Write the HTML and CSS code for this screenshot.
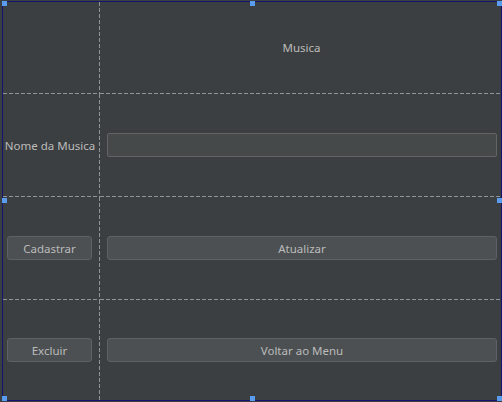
FILE: index.html
```html
<!DOCTYPE html>
<html>
<head>
<meta charset="utf-8">
<link rel="stylesheet" href="styles.css">
</head>
<body>
<div class="frame">
  <div class="grid">
    <div class="cell c1 r0"></div>
    <div class="cell c2 r0"><span class="title">Musica</span></div>
    <div class="cell c1 r1"><span class="label">Nome da Musica</span></div>
    <div class="cell c2 r1"><div class="field"></div></div>
    <div class="cell c1 r2"><div class="btn small">Cadastrar</div></div>
    <div class="cell c2 r2"><div class="btn wide">Atualizar</div></div>
    <div class="cell c1 r3"><div class="btn small">Excluir</div></div>
    <div class="cell c2 r3"><div class="btn wide">Voltar ao Menu</div></div>
  </div>
  <span class="handle h-tl"></span>
  <span class="handle h-tm"></span>
  <span class="handle h-tr"></span>
  <span class="handle h-ml"></span>
  <span class="handle h-mr"></span>
  <span class="handle h-bl"></span>
  <span class="handle h-bm"></span>
  <span class="handle h-br"></span>
</div>
</body>
</html>
```

FILE: styles.css
```css
html, body {
  margin: 0;
  padding: 0;
  background: #3c3f41;
}
body {
  width: 502px;
  height: 402px;
  overflow: hidden;
  font-family: "Noto Sans", "DejaVu Sans", sans-serif;
  font-size: 11.5px;
  color: #bbbbbb;
}
.frame {
  position: relative;
  margin: 1px 0 0 2px;
  width: 498px;
  height: 398px;
  border: 1px solid #14146e;
}
.grid {
  display: grid;
  grid-template-columns: 97px 401px;
  grid-template-rows: 92px 103px 103px 100px;
}
.cell {
  display: flex;
  align-items: center;
  background-repeat: no-repeat;
}
.c1 {
  background-image: repeating-linear-gradient(180deg, #8f949a 0 4px, transparent 4px 6px);
  background-position: right top;
  background-size: 1px 100%;
}
.c1.r0, .c1.r1, .c1.r2 {
  background-image:
    repeating-linear-gradient(180deg, #8f949a 0 4px, transparent 4px 6px),
    repeating-linear-gradient(90deg, #8f949a 0 4px, transparent 4px 6px);
  background-position: right top, left bottom;
  background-size: 1px 100%, 100% 1px;
}
.c2.r0, .c2.r1, .c2.r2 {
  background-image: repeating-linear-gradient(90deg, #8f949a 0 4px, transparent 4px 6px);
  background-position: left bottom;
  background-size: 100% 1px;
}
.r0, .r1, .r2 {
  padding-bottom: 1px;
}
.c1 {
  padding-right: 1px;
  justify-content: center;
}
.c2 {
  padding: 0 4px 0 7px;
}
.c2.r0 {
  justify-content: center;
  padding: 0 0 1px 0;
}
.c2.r1, .c2.r2 {
  padding-bottom: 1px;
}
.title {
  margin-left: 2px;
}
.label {
  white-space: nowrap;
  margin-right: 2px;
}
.field {
  flex: 1;
  height: 22px;
  background: #45494a;
  border: 1px solid #646464;
  border-radius: 2px;
}
.btn {
  box-sizing: border-box;
  height: 24px;
  display: flex;
  align-items: center;
  justify-content: center;
  background: #4c5052;
  border: 1px solid #5e6165;
  border-radius: 3px;
  color: #bbbbbb;
}
.btn.small {
  width: 85px;
  margin-right: 3px;
}
.btn.wide {
  flex: 1;
}
.handle {
  position: absolute;
  width: 5px;
  height: 5px;
  background: #5a9cf0;
}
.h-tl { left: -1px; top: -1px; }
.h-tm { left: 247px; top: -1px; }
.h-tr { right: -1px; top: -1px; }
.h-ml { left: -1px; top: 196px; }
.h-mr { right: -1px; top: 196px; }
.h-bl { left: -1px; bottom: -1px; }
.h-bm { left: 247px; bottom: -1px; }
.h-br { right: -1px; bottom: -1px; }
```
